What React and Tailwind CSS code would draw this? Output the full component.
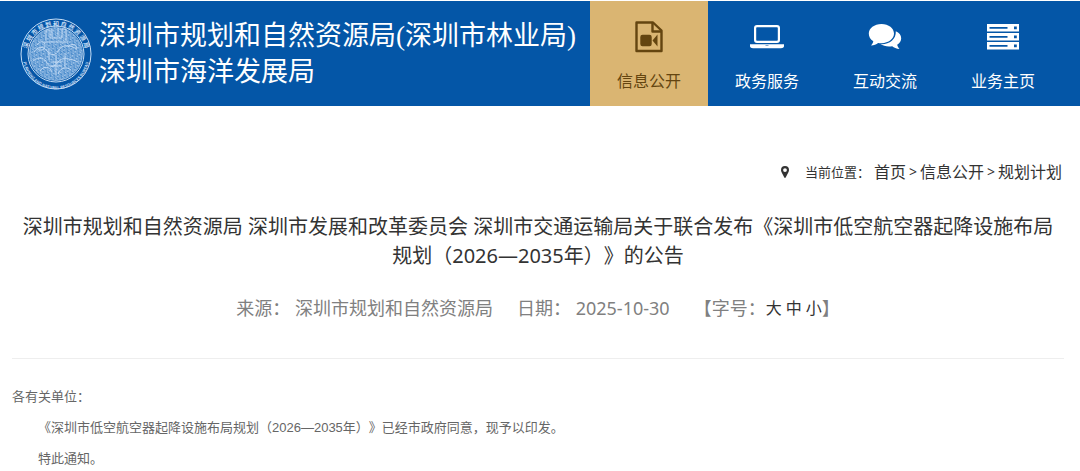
import clsx from 'clsx';

const FileVideoIcon = () => (
  <svg viewBox="0 0 28 32" className="h-8 w-7" fill="none" stroke="currentColor" strokeWidth="2.4" strokeLinejoin="round">
    <path d="M1.500 1.500h16.500l8.500 8V30h-25z" />
    <path d="M17.500 1.500v9h9" />
    <rect x="6.500" y="15" width="9" height="9" rx="1" fill="currentColor" />
    <path d="M17.500 19.500l5-6v12z" fill="currentColor" stroke="none" />
  </svg>
);

const LaptopIcon = () => (
  <svg viewBox="0 0 36 24" className="h-6 w-9" fill="currentColor">
    <path fillRule="evenodd" d="M8 0h20a3 3 0 0 1 3 3v12a3 3 0 0 1-3 3H8a3 3 0 0 1-3-3V3a3 3 0 0 1 3-3zm0 2.200a.8.8 0 0 0-.8.8v12a.8.8 0 0 0 .8.8h20a.8.8 0 0 0 .8-.8V3a.8.8 0 0 0-.8-.8z" />
    <path fillRule="evenodd" d="M1 19.300h34v2c0 1-1.500 2-3 2H4c-1.500 0-3-1-3-2zM16.500 20.500v.6h3v-.6z" />
  </svg>
);

const CommentsIcon = () => (
  <svg viewBox="0 0 34 26" className="h-[26px] w-[34px]" fill="currentColor">
    <path d="M13.500 0C20.700 0 26 4.300 26 9.600s-5.300 9.600-12.500 9.600c-1.200 0-2.300-.1-3.400-.3-1.700 1.300-4.200 2.300-7.100 2.500 1.200-1.200 2-2.500 2.300-4.100C2.400 15.500.8 12.800.8 9.600.8 4.300 6.300 0 13.500 0z" />
    <path d="M27.800 7.200c3.300 1.300 5.400 3.900 5.400 7 0 2.800-1.600 5-4 6.500.4 1.700 1.200 3 2.300 4.200-3 0-5.600-1.200-7.300-2.600-4.500.8-8.800-.1-11.700-2.200 8.300.6 15.800-4.500 15.300-12.900z" />
  </svg>
);

const ServerIcon = () => (
  <svg viewBox="0 0 32 26" className="h-[26px] w-8" fill="currentColor">
    <path fillRule="evenodd" d="M0 0h32v7.500H0zM2.500 3v1.800h18V3zM27 2.500v2.800h2.800V2.500z" />
    <path fillRule="evenodd" d="M0 9h32v7.500H0zM2.500 12v1.800h18V12zM27 11.500v2.800h2.800v-2.800z" />
    <path fillRule="evenodd" d="M0 18h32v7.500H0zM2.500 21v1.800h18V21zM27 20.500v2.800h2.800v-2.800z" />
  </svg>
);

const MarkerIcon = () => (
  <svg viewBox="0 0 8 12" className="h-3 w-2" fill="currentColor">
    <path fillRule="evenodd" d="M4 0a4 4 0 0 1 4 4c0 1-.3 1.700-.6 2.300L4.700 11.500c-.3.600-1.100.600-1.400 0L.6 6.300C.3 5.700 0 5 0 4a4 4 0 0 1 4-4zm0 2.200a1.900 1.900 0 1 0 0 3.800 1.900 1.900 0 0 0 0-3.800z" />
  </svg>
);

const Emblem = () => (
  <svg viewBox="0 0 72 72" className="size-[72px] shrink-0 text-[#c6ddf5]" fill="none" stroke="currentColor">
    <defs>
      <path id="ring-top" d="M6.500 37a29.500 29.500 0 0 1 59 0" />
      <path id="ring-bottom" d="M2.800 38a33.200 33.200 0 0 0 66.400 0" />
      <pattern id="weave" width="5" height="5" patternUnits="userSpaceOnUse" patternTransform="rotate(35)">
        <path d="M0 1h3v2.500h2M1 5V3M4.500 0v2" strokeWidth="0.7" />
      </pattern>
    </defs>
    <circle cx="36" cy="36" r="35" strokeWidth="1" />
    <circle cx="36" cy="36" r="28" strokeWidth="1" />
    <circle cx="36" cy="36" r="26.500" fill="#4a8bcb" stroke="none" />
    <circle cx="36" cy="36" r="26.500" fill="url(#weave)" strokeWidth="0.5" />
    <path d="M26 22V12h4v8h12v-9h4v12M32 11v8M38 10v9M24 24h24M14 34c4-6 10-6 13-1s9 5 12-1 11-5 18-1M13 43c6-5 12-3 14 2s8 4 11-1 12-4 20 0M20 53c4-6 10-4 12 1M38 56c2-6 8-8 13-4M29 30v12M36 37v20M45 35v14M17 27c3-5 8-4 8 1s-6 5-8 2M48 29c3-4 8-3 9 1M31 44h11M31 48h11" strokeWidth="0.9" />
    <g fill="currentColor" stroke="none" fontFamily="'Noto Sans CJK SC', sans-serif" fontWeight="700">
      <text fontSize="6"><textPath href="#ring-top" startOffset="50%" textAnchor="middle">深 圳 市 规 划 和 自 然 资 源 局</textPath></text>
      <text fontSize="4"><textPath href="#ring-bottom" startOffset="50%" textAnchor="middle">PLANNING AND NATURAL RESOURCES BUREAU</textPath></text>
    </g>
  </svg>
);

const NAV_ITEMS = [
  { label: '信息公开', icon: FileVideoIcon, active: true },
  { label: '政务服务', icon: LaptopIcon },
  { label: '互动交流', icon: CommentsIcon },
  { label: '业务主页', icon: ServerIcon },
];

const CRUMBS = ['首页', '信息公开', '规划计划'];

export default function App() {
  return (
    <div lang="zh-CN" className="bg-white font-['Noto_Sans','Noto_Sans_CJK_SC',sans-serif] text-[#333] [text-spacing-trim:space-all]">
      <header className="mt-px flex items-stretch bg-[#0456a7] pr-[18px]">
        <a href="#" className="flex flex-1 items-center gap-[7px] pl-5 font-['Liberation_Serif','Noto_Sans_CJK_SC',serif] text-[27px] leading-9 whitespace-nowrap text-white">
          <Emblem />
          <span>深圳市规划和自然资源局(深圳市林业局)<br />深圳市海洋发展局</span>
        </a>
        <nav className="flex">
          {NAV_ITEMS.map(({ label, icon: Icon, active }) => (
            <a
              key={label}
              href="#"
              className={clsx('flex h-[105px] w-[118px] flex-col items-center pt-4', active ? 'bg-[#dab572] text-[#644510]' : 'text-white')}
            >
              <span className="flex h-10 items-center"><Icon /></span>
              <span className="mt-3 leading-6">{label}</span>
            </a>
          ))}
        </nav>
      </header>

      {/* Breadcrumb */}
      <nav className="mt-[54px] flex items-center justify-end pr-[18px] leading-6">
        <MarkerIcon />
        <span className="ml-4 text-[13px]">当前位置：</span>
        <span className="ml-1 flex gap-[3px]">
          {CRUMBS.map((crumb, i) => (
            <span key={crumb} className="flex gap-[3px]">
              {i > 0 && <span className="text-sm leading-6">&gt;</span>}
              <a href="#">{crumb}</a>
            </span>
          ))}
        </span>
      </nav>

      <main className="pr-4 pl-3">
        <h1 className="mt-7 px-1 text-center text-xl leading-[29px]">
          深圳市规划和自然资源局 深圳市发展和改革委员会 深圳市交通运输局关于联合发布《深圳市低空航空器起降设施布局规划（2026—2035年）》的公告
        </h1>

        <div className="mt-6 flex justify-center gap-6 border-b border-[#eee] pb-9 text-lg text-[#808080]">
          <span>来源： 深圳市规划和自然资源局</span>
          <span>日期： 2025-10-30</span>
          <span className="flex items-center">
            【字号：
            <span className="flex gap-1 text-base text-[#333]">
              <button type="button">大</button>
              <button type="button">中</button>
              <button type="button">小</button>
            </span>
            】
          </span>
        </div>

        <article className="mt-[22px] font-['Liberation_Sans','Noto_Sans_CJK_SC',sans-serif] text-[13px] leading-[31px] text-[#666]">
          <p>各有关单位：</p>
          <p className="indent-[2em]">《深圳市低空航空器起降设施布局规划（2026—2035年）》已经市政府同意，现予以印发。</p>
          <p className="indent-[2em]">特此通知。</p>
        </article>
      </main>
    </div>
  );
}
